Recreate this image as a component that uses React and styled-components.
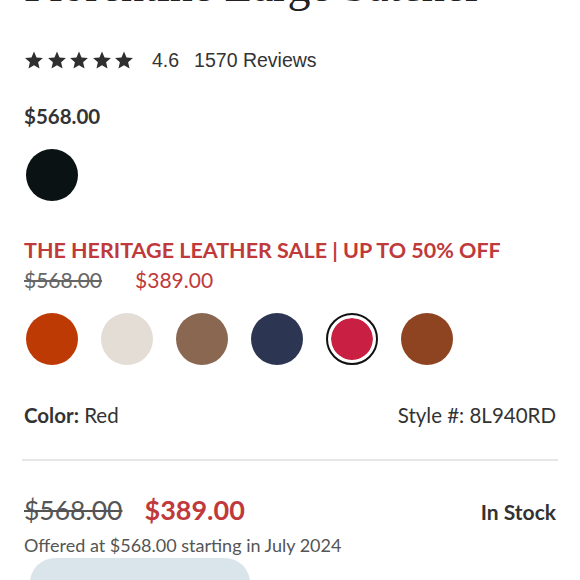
import React from "react";
import styled, { createGlobalStyle } from "styled-components";

const GlobalStyle = createGlobalStyle`
  html, body {
    margin: 0;
    padding: 0;
    background: #ffffff;
  }
  body {
    font-family: "Lato", "Open Sans", sans-serif;
    color: #333333;
    overflow: hidden;
  }
`;

const swatches = [
  { name: "Orange", color: "#bd3a05" },
  { name: "Cream", color: "#e4ddd6" },
  { name: "Taupe", color: "#8a6751" },
  { name: "Navy", color: "#2c3551" },
  { name: "Red", color: "#c81f43" },
  { name: "Brown", color: "#8e4420" },
];

const Star = () => (
  <svg width="20" height="20" viewBox="0 0 24 24">
    <path
      d="M12 1.8l3.05 7.1 7.7.68-5.84 5.06 1.76 7.54L12 18.2l-6.67 3.98 1.76-7.54L1.25 9.58l7.7-.68z"
      fill="#2f2f2f"
    />
  </svg>
);

const App = () => {
  const selected = "Red";

  return (
    <Page>
      <GlobalStyle />
      <Title>Florentine Large Satchel</Title>
      <Rating>
        <Stars>
          {[0, 1, 2, 3, 4].map((i) => (
            <Star key={i} />
          ))}
        </Stars>
        <RatingText $gap={15}>4.6</RatingText>
        <RatingText>1570 Reviews</RatingText>
      </Rating>

      <BasePrice>$568.00</BasePrice>

      <SwatchRow>
        <Swatch $color="#0a1214" />
      </SwatchRow>

      <SaleTitle>THE HERITAGE LEATHER SALE | UP TO 50% OFF</SaleTitle>
      <SalePrices>
        <Strike>$568.00</Strike>
        <SalePrice>$389.00</SalePrice>
      </SalePrices>

      <SwatchRow $gap={23} $top={21}>
        {swatches.map((s) => (
          <Swatch key={s.name} $color={s.color} $selected={s.name === selected} />
        ))}
      </SwatchRow>

      <MetaRow>
        <span>
          <b>Color:</b> Red
        </span>
        <span>Style #: 8L940RD</span>
      </MetaRow>

      <Divider />

      <PriceRow>
        <PriceGroup>
          <BigStrike>$568.00</BigStrike>
          <BigSale>$389.00</BigSale>
        </PriceGroup>
        <Stock>In Stock</Stock>
      </PriceRow>
      <Offered>Offered at $568.00 starting in July 2024</Offered>

      <BottomRow>
        <Pill />
        <PayText>Pay in 4 interest-free</PayText>
      </BottomRow>
    </Page>
  );
};

export default App;

const Page = styled.div`
  width: 580px;
  height: 580px;
  box-sizing: border-box;
  padding: 0 24px;
  overflow: hidden;
`;

const Title = styled.h1`
  font-family: "Liberation Serif", "DejaVu Serif", serif;
  font-weight: 400;
  font-size: 46px;
  line-height: 54px;
  margin: -41px 0 0;
  color: #222;
  white-space: nowrap;
`;

const Rating = styled.div`
  display: flex;
  align-items: center;
  margin-top: 37px;
  height: 20px;
`;

const Stars = styled.div`
  display: flex;
  gap: 2.5px;
  margin-right: 18px;
`;

const RatingText = styled.span`
  font-family: "Liberation Sans", Arial, sans-serif;
  font-size: 19.5px;
  color: #333;
  margin-right: ${(p) => p.$gap || 0}px;
`;

const BasePrice = styled.div`
  font-size: 20.5px;
  font-weight: 700;
  line-height: 24px;
  margin-top: 34px;
  color: #333;
`;

const SwatchRow = styled.div`
  display: flex;
  gap: ${(p) => p.$gap || 0}px;
  margin-top: ${(p) => p.$top || 21}px;
  padding-left: 2px;
`;

const Swatch = styled.div`
  width: 52px;
  height: 52px;
  border-radius: 50%;
  box-sizing: border-box;
  background: ${(p) => p.$color};
  ${(p) =>
    p.$selected &&
    `
    border: 2px solid #111;
    box-shadow: inset 0 0 0 3px #fff;
    background-clip: content-box;
    padding: 3px;
  `}
`;

const SaleTitle = styled.div`
  font-size: 21.5px;
  font-weight: 700;
  line-height: 24px;
  color: #c0393b;
  margin-top: 37px;
`;

const SalePrices = styled.div`
  display: flex;
  gap: 33px;
  font-size: 21px;
  line-height: 24px;
  margin-top: 6px;
`;

const Strike = styled.span`
  color: #666;
  text-decoration: line-through;
`;

const SalePrice = styled.span`
  color: #c0393b;
`;

const MetaRow = styled.div`
  display: flex;
  justify-content: space-between;
  font-size: 20.5px;
  line-height: 24px;
  margin-top: 38px;
  color: #333;

  b {
    font-weight: 700;
  }
`;

const Divider = styled.hr`
  border: none;
  border-top: 2px solid #e6e6e6;
  margin: 32px -2px 0;
`;

const PriceRow = styled.div`
  display: flex;
  justify-content: space-between;
  align-items: baseline;
  margin-top: 34px;
`;

const PriceGroup = styled.div`
  display: flex;
  gap: 22px;
  align-items: baseline;
`;

const BigStrike = styled.span`
  font-size: 26.5px;
  line-height: 30px;
  color: #555;
  text-decoration: line-through;
`;

const BigSale = styled.span`
  font-size: 27px;
  line-height: 30px;
  font-weight: 700;
  color: #c0393b;
`;

const Stock = styled.span`
  font-size: 21px;
  font-weight: 700;
  color: #333;
`;

const Offered = styled.div`
  font-size: 18px;
  line-height: 22px;
  color: #555;
  margin-top: 9px;
`;

const BottomRow = styled.div`
  display: flex;
  align-items: flex-start;
  gap: 20px;
  margin-top: 2px;
  padding-left: 6px;
`;

const Pill = styled.div`
  width: 220px;
  height: 50px;
  border-radius: 25px;
  background: #dae4eb;
  flex-shrink: 0;
`;

const PayText = styled.span`
  font-size: 22px;
  font-weight: 700;
  color: #333;
  margin-top: 19px;
`;
